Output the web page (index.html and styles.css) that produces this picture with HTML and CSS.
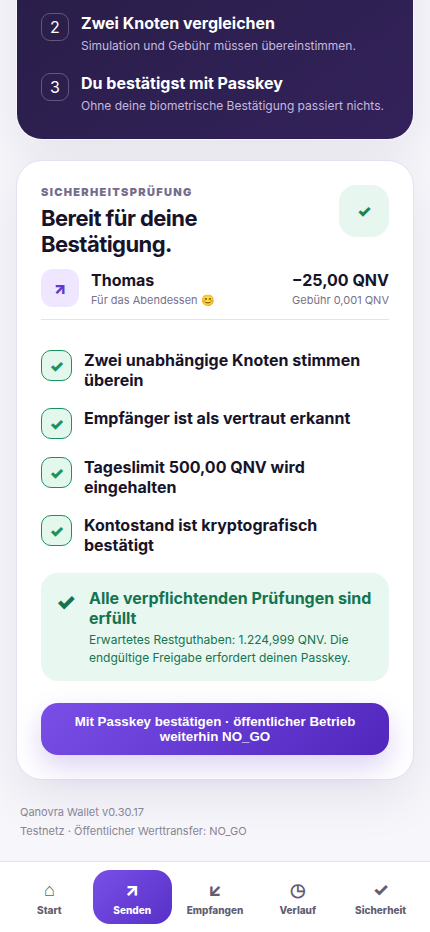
FILE: index.html
```html
<!DOCTYPE html>
<html lang="de">
<head>
<meta charset="utf-8">
<title>Qanovra Wallet</title>
<meta name="viewport" content="width=device-width, initial-scale=1">
<link rel="stylesheet" href="styles.css">
</head>
<body>
<main>
  <section class="card intro">
    <div class="step"><span class="num">2</span><div><b>Zwei Knoten vergleichen</b><small>Simulation und Gebühr müssen übereinstimmen.</small></div></div>
    <div class="step"><span class="num">3</span><div><b>Du bestätigst mit Passkey</b><small>Ohne deine biometrische Bestätigung passiert nichts.</small></div></div>
  </section>
  <section class="card review">
    <header class="review-head">
      <div><p class="eyebrow">SICHERHEITSPRÜFUNG</p><h2>Bereit für deine Bestätigung.</h2></div>
      <span class="shield">✓</span>
    </header>
    <div class="recipient">
      <span class="avatar">↗</span>
      <div class="who"><b>Thomas</b><small>Für das Abendessen 😊</small></div>
      <div class="amount"><b>−25,00 QNV</b><small>Gebühr 0,001 QNV</small></div>
    </div>
    <div class="checks">
      <div class="check"><span>✓</span><b>Zwei unabhängige Knoten stimmen überein</b></div>
      <div class="check"><span>✓</span><b>Empfänger ist als vertraut erkannt</b></div>
      <div class="check"><span>✓</span><b>Tageslimit 500,00 QNV wird eingehalten</b></div>
      <div class="check"><span>✓</span><b>Kontostand ist kryptografisch bestätigt</b></div>
    </div>
    <div class="result">
      <span>✓</span>
      <div><b>Alle verpflichtenden Prüfungen sind erfüllt</b><small>Erwartetes Restguthaben: 1.224,999 QNV. Die endgültige Freigabe erfordert deinen Passkey.</small></div>
    </div>
    <button class="confirm">Mit Passkey bestätigen · öffentlicher Betrieb weiterhin NO_GO</button>
  </section>
  <footer>Qanovra Wallet v0.30.17<br>Testnetz · Öffentlicher Werttransfer: NO_GO</footer>
</main>
<nav>
  <a><span>⌂</span>Start</a>
  <a class="active"><span>↗</span>Senden</a>
  <a><span>↙</span>Empfangen</a>
  <a><span>◷</span>Verlauf</a>
  <a><span>✓</span>Sicherheit</a>
</nav>
</body>
</html>
```
FILE: styles.css
```css
* { box-sizing: border-box; }
body {
  margin: 0;
  height: 932px;
  display: flex;
  flex-direction: column;
  overflow: hidden;
  background: #f7f6fb;
  color: #171429;
  font-family: Inter, "Liberation Sans", sans-serif;
  font-size: 16px;
}
main { flex: 1; min-height: 0; padding: 0 16px; }
b, small { display: block; }
.card {
  border: 1px solid #e4e1f0;
  border-radius: 26px;
  box-shadow: 0 18px 50px rgba(31, 22, 67, .08);
}
.intro {
  display: grid;
  gap: 19px;
  height: 390px;
  margin-top: -250px;
  padding: 0 24px 25px;
  align-content: end;
  border-color: transparent;
  background: linear-gradient(145deg, #241b3e, #33225b) padding-box;
  color: #fff;
}
.step { display: flex; gap: 12px; height: 41px; }
.num {
  flex: none;
  display: grid;
  place-items: center;
  width: 28px;
  height: 28px;
  border: 1px solid rgba(255, 255, 255, .25);
  border-radius: 9px;
}
.step b { line-height: 20px; }
.step small { margin-top: 4px; font-size: 12px; line-height: 18px; color: #c4b9df; }
.review {
  height: 620px;
  margin-top: 20px;
  padding: 24px;
  background: #fff;
}
.review-head { display: flex; justify-content: space-between; height: 84px; }
.review-head > div { width: 220px; }
.eyebrow { margin: 0; font-size: 11px; line-height: 14px; font-weight: 900; letter-spacing: 1.32px; color: #746d8c; }
h2 { margin: 6px 0 0; font-size: 22px; line-height: 26px; letter-spacing: -.55px; }
.shield {
  display: grid;
  place-items: center;
  width: 50px;
  height: 52px;
  border-radius: 17px;
  background: #e7f6ef;
  color: #16875a;
  font-weight: 900;
}
.recipient { display: flex; align-items: center; gap: 12px; height: 51px; padding-bottom: 12px; border-bottom: 1px solid #e4e1f0; }
.avatar {
  display: grid;
  place-items: center;
  width: 38px;
  height: 38px;
  border-radius: 12px;
  background: #eee7ff;
  color: #6338cf;
  font-weight: 900;
}
.who { flex: 1; }
.who, .amount { padding-top: 2px; }
.amount { text-align: right; }
.recipient b { line-height: 20px; }
.recipient small { font-size: 11px; line-height: 16px; margin-top: 2px; color: #777188; }
.checks { display: grid; gap: 18px; margin-top: 30px; }
.check { display: flex; align-items: flex-start; gap: 12px; }
.check span {
  flex: none;
  display: grid;
  place-items: center;
  width: 31px;
  height: 31px;
  border: 1px solid #179360;
  border-radius: 10px;
  background: #e4f7ec;
  color: #179360;
  font-weight: 900;
}
.check b { line-height: 20px; }
.result {
  display: flex;
  gap: 12px;
  height: 108px;
  margin-top: 18px;
  padding: 15px 16px;
  border-radius: 17px;
  background: #e8f7f0;
  color: #147450;
}
.result span { flex: none; width: 20px; font-size: 22px; line-height: 29px; font-weight: 900; text-indent: -1px; }
.result b { line-height: 20px; }
.result small { margin-top: 3px; font-size: 12px; line-height: 18px; }
.confirm {
  display: block;
  width: 100%;
  height: 52px;
  margin-top: 22px;
  padding: 0 18px;
  border: 0;
  border-radius: 17px;
  background: linear-gradient(135deg, #794fe8, #5126bd);
  box-shadow: 0 12px 28px rgba(99, 56, 207, .22);
  color: #fff;
  font: bold 13.333px/15px "Liberation Sans", Arial, sans-serif;
}
footer { padding: 23px 4px; font-size: 11px; line-height: 19px; color: #898495; }
nav {
  display: grid;
  grid-template-columns: repeat(5, 1fr);
  gap: 4px;
  flex: none;
  height: 71px;
  padding: 8px 10px;
  border-top: 1px solid #e4e1f0;
  background: #fff;
}
nav a {
  display: flex;
  flex-direction: column;
  align-items: center;
  padding-top: 7px;
  border-radius: 17px;
  color: #625d72;
  font-size: 10px;
  line-height: 14px;
  font-weight: 800;
}
nav span { height: 26px; font-size: 18px; line-height: 25px; font-weight: 800; }
nav .active { background: linear-gradient(135deg, #794fe8, #5731c7); color: #fff; }
```
